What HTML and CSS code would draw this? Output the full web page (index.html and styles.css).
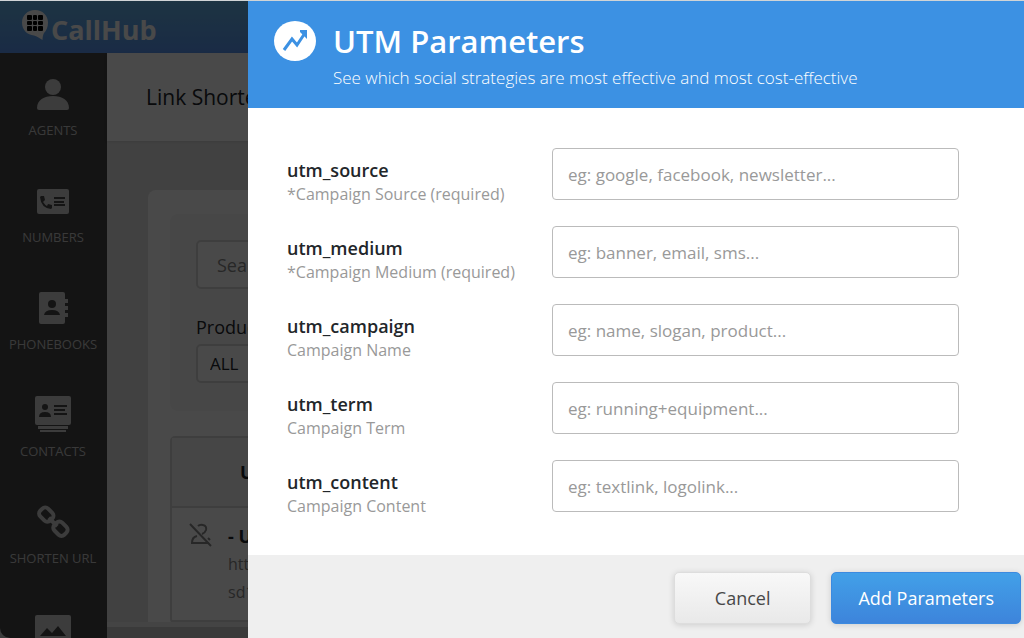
FILE: index.html
```html
<!DOCTYPE html>
<html lang="en">

<head>
    <meta charset="UTF-8">
    <meta name="viewport" content="width=device-width, initial-scale=1.0">
    <title>CallHub - UTM Parameters</title>

    <link rel="stylesheet" href="styles.css">
</head>

<body>
    <div class="page">
        <header class="topbar">
            <svg class="logo-mark" width="28" height="32" viewBox="0 0 28 32">
                <path class="bubble" d="M14 1C6.500 1 1 6.500 1 13.500C1 21 6.500 26 13 26.500C16 27 18 29 21.500 31C21.500 28 22 26 23 24C25.500 21.500 27 18 27 13.500C27 6.500 21.500 1 14 1Z" />
                <g class="keys">
                    <rect x="6" y="6" width="5" height="5" rx="1" />
                    <rect x="12" y="6" width="4" height="5" rx="1" />
                    <rect x="17" y="6" width="5" height="5" rx="1" />
                    <rect x="6" y="12" width="5" height="4" rx="1" />
                    <rect x="12" y="12" width="4" height="4" rx="1" />
                    <rect x="17" y="12" width="5" height="4" rx="1" />
                    <rect x="6" y="17" width="5" height="5" rx="1" />
                    <rect x="12" y="17" width="4" height="5" rx="1" />
                    <rect x="17" y="17" width="5" height="5" rx="1" />
                </g>
            </svg>
            <span class="logo-text">CallHub</span>
        </header>

        <div class="main">
            <nav class="sidebar">
                <a href="#agents">
                    <svg viewBox="0 0 40 40">
                        <circle cx="20" cy="13" r="8" />
                        <path d="M4 34C4 26 11 22 20 22s16 4 16 12q0 2-2 2H6q-2 0-2-2z" />
                    </svg>
                    <span>AGENTS</span>
                </a>
                <a href="#numbers">
                    <svg viewBox="0 0 40 40">
                        <rect x="4" y="8" width="32" height="25" rx="2" />
                        <path class="cut" d="M8 15l3 0 1 4-2 2q2 3 4 4l1-2 4 1v3l-1 1Q8 27 7 16z" />
                        <path class="cut-line" d="M21 17h11M21 21h10M21 24h11" />
                    </svg>
                    <span>NUMBERS</span>
                </a>
                <a href="#phonebooks">
                    <svg viewBox="0 0 40 40">
                        <path d="M8 4h22q2 0 2 2v5h3v4h-3v3h3v4h-3v3h3v4h-3v5q0 2-2 2H8q-2 0-2-2V6q0-2 2-2z" />
                        <circle class="cut" cx="19" cy="16" r="4" />
                        <path class="cut" d="M11 27q1-5 8-5t8 5z" />
                    </svg>
                    <span>PHONEBOOKS</span>
                </a>
                <a href="#contacts">
                    <svg viewBox="0 0 40 40">
                        <rect x="2" y="1" width="36" height="29" rx="2" />
                        <path d="M5 31h30v3H5zM7 35h26v2H7z" />
                        <circle class="cut" cx="12" cy="12" r="3" />
                        <path class="cut" d="M6 22q0-5 6-5t6 5z" />
                        <path class="cut-line" d="M21 11h13M21 15h11M21 19h13" />
                    </svg>
                    <span>CONTACTS</span>
                </a>
                <a href="#shorten">
                    <svg viewBox="0 0 40 40">
                        <g class="chain" transform="rotate(45 20 20)">
                            <rect x="3" y="14" width="14" height="11" rx="4" />
                            <rect x="23" y="14" width="14" height="11" rx="4" />
                            <path d="M14 20h12" />
                        </g>
                    </svg>
                    <span>SHORTEN URL</span>
                </a>
                <a href="#media" aria-label="Media">
                    <svg viewBox="0 0 40 40">
                        <rect x="2" y="6" width="36" height="30" rx="2" />
                        <path class="cut" d="M7 27l7-8 5 5 6-7 8 10z" />
                    </svg>
                </a>
            </nav>

            <main class="content">
                <h1>Link Shortener</h1>

                <section class="panel">
                    <div class="filters">
                        <input type="text" placeholder="Search" aria-label="Search">
                        <label for="product">Product</label>
                        <select id="product">
                            <option>ALL</option>
                        </select>
                    </div>

                    <table class="links">
                        <thead>
                            <tr>
                                <th></th>
                                <th>URL</th>
                            </tr>
                        </thead>
                        <tbody>
                            <tr>
                                <td class="status">
                                    <svg width="26" height="26" viewBox="0 0 26 26">
                                        <path d="M10 4q2-2 5-1 4 1 3 5-1 3-4 4M9 14q-5 1-5 7h17M2 2l21 22M20 16l2 2" />
                                    </svg>
                                </td>
                                <td class="url">
                                    <strong>- URL</strong>
                                    <span>https://</span>
                                    <span>sd1</span>
                                </td>
                            </tr>
                        </tbody>
                    </table>
                </section>
                <div class="scrollbar"></div>
            </main>
        </div>
    </div>

    <div class="overlay"></div>

    <form class="drawer" role="dialog" aria-labelledby="drawer-title">
        <header class="drawer-header">
            <svg class="trend" width="42" height="40" viewBox="0 0 42 40">
                <ellipse cx="21" cy="20" rx="21" ry="20" />
                <path class="line" d="M10 29l8-11 5 6 8-12" />
                <path class="head" d="M26 9h7v9l-3-3-4-4z" />
            </svg>
            <div>
                <h2 id="drawer-title">UTM Parameters</h2>
                <p>See which social strategies are most effective and most cost-effective</p>
            </div>
        </header>

        <div class="fields">
            <div class="field">
                <label for="utm_source">utm_source <small>*Campaign Source (required)</small></label>
                <input id="utm_source" type="text" placeholder="eg: google, facebook, newsletter...">
            </div>
            <div class="field">
                <label for="utm_medium">utm_medium <small>*Campaign Medium (required)</small></label>
                <input id="utm_medium" type="text" placeholder="eg: banner, email, sms...">
            </div>
            <div class="field">
                <label for="utm_campaign">utm_campaign <small>Campaign Name</small></label>
                <input id="utm_campaign" type="text" placeholder="eg: name, slogan, product...">
            </div>
            <div class="field">
                <label for="utm_term">utm_term <small>Campaign Term</small></label>
                <input id="utm_term" type="text" placeholder="eg: running+equipment...">
            </div>
            <div class="field">
                <label for="utm_content">utm_content <small>Campaign Content</small></label>
                <input id="utm_content" type="text" placeholder="eg: textlink, logolink...">
            </div>
        </div>

        <footer class="drawer-footer">
            <button type="button" class="btn">Cancel</button>
            <button type="submit" class="btn primary">Add Parameters</button>
        </footer>
    </form>
</body>

</html>
```
FILE: styles.css
```css
* {
    box-sizing: border-box;
}

body {
    margin: 0;
    height: 100vh;
    overflow: hidden;
    font-family: "Open Sans", "Noto Sans", sans-serif;
    color: #22262a;
    background-color: #d0d4d6;
}

h1,
h2,
p {
    margin: 0;
}

input,
select,
button {
    font-family: inherit;
}

.page {
    display: flex;
    flex-direction: column;
    height: 100vh;
    padding-top: 1px;
    border-bottom-left-radius: 10px;
    overflow: hidden;
}

/* top bar */
.topbar {
    flex: none;
    display: flex;
    align-items: flex-start;
    gap: 2px;
    height: 52px;
    padding: 8px 21px;
    background-image: linear-gradient(#65b4e8, #5a96f0);
}

.bubble {
    fill: #ffffff;
}

.keys {
    fill: #000000;
}

.logo-text {
    margin-top: 3px;
    font-size: 27px;
    line-height: 36px;
    font-weight: 700;
    color: #ffffff;
}

.main {
    flex: 1;
    display: flex;
    min-height: 0;
}

/* side menu */
.sidebar {
    flex: none;
    width: 107px;
    overflow: hidden;
    background-color: #464646;
}

.sidebar a {
    display: flex;
    flex-direction: column;
    align-items: center;
    gap: 6px;
    height: 107px;
    padding: 21px 1px 0 0;
    font-size: 13px;
    line-height: 20px;
    color: #c8c8c8;
    text-decoration: none;
    white-space: nowrap;
}

.sidebar svg {
    flex: none;
    width: 40px;
    height: 40px;
    fill: #d0d0d0;
}

.sidebar .cut {
    fill: #464646;
}

.sidebar .cut-line {
    fill: none;
    stroke: #464646;
    stroke-width: 2;
}

.sidebar .chain {
    fill: none;
    stroke: #d0d0d0;
    stroke-width: 4;
}

/* link list behind the drawer */
.content {
    flex: 1;
    display: flex;
    flex-direction: column;
    min-width: 0;
    background-color: #e4e4e4;
}

.content h1 {
    flex: none;
    padding: 29px 39px;
    font-size: 21px;
    line-height: 30px;
    font-weight: 400;
    background-color: #ffffff;
    box-shadow: 0 1px 3px rgba(0, 0, 0, 0.1);
}

.panel {
    flex: 1;
    min-height: 0;
    margin: 49px 40px 0 41px;
    padding: 24px 22px 0;
    border-radius: 8px 8px 0 0;
    overflow: hidden;
    background-color: #ffffff;
}

.filters {
    display: flex;
    flex-direction: column;
    align-items: flex-start;
    height: 197px;
    padding: 26px;
    border-radius: 8px;
    background-color: #f8f8f8;
}

.filters input {
    width: 240px;
    height: 49px;
    padding: 0 19px;
    border: 2px solid #d8d8d8;
    border-radius: 5px;
    font-size: 18px;
    background-color: #ffffff;
}

.filters input::placeholder {
    color: #888888;
}

.filters label {
    margin: 26px 0 4px;
    font-size: 18px;
    line-height: 25px;
}

.filters select {
    width: 240px;
    height: 39px;
    padding: 0 12px;
    border: 2px solid #d8d8d8;
    border-radius: 5px;
    font-size: 17px;
    color: #22262a;
    appearance: none;
    background-color: #ffffff;
}

.links {
    width: 100%;
    margin-top: 25px;
    border: 2px solid #d8d8d8;
    border-radius: 5px;
    border-spacing: 0;
}

.links th {
    height: 70px;
    padding: 0 12px;
    border-bottom: 2px solid #d8d8d8;
    font-size: 18px;
    text-align: left;
    background-color: #f3f3f3;
}

.links td {
    height: 112px;
    padding: 14px 0;
    border-bottom: 2px solid #d8d8d8;
    vertical-align: top;
}

.links .status {
    width: 56px;
    padding-left: 16px;
}

.status svg {
    fill: none;
    stroke: #888888;
    stroke-width: 2;
}

.url strong,
.url span {
    display: block;
    line-height: 28px;
}

.url strong {
    font-size: 18px;
}

.url span {
    font-size: 16px;
    color: #888888;
}

.scrollbar {
    flex: none;
    height: 16px;
    border-top: 5px solid #ededed;
    background-color: #cccccc;
}

.overlay {
    position: fixed;
    inset: 1px 0 0;
    background-color: rgba(0, 0, 0, 0.715);
}

/* drawer */
.drawer {
    position: fixed;
    inset: 1px 0 0 248px;
    display: flex;
    flex-direction: column;
    background-color: #ffffff;
}

.drawer-header {
    display: flex;
    gap: 17px;
    height: 107px;
    padding: 20px 26px;
    color: #ffffff;
    background-color: #3c91e3;
}

.drawer-header svg {
    flex: none;
    fill: #ffffff;
}

.trend .line {
    fill: none;
    stroke: #3c91e3;
    stroke-width: 3;
}

.trend .head {
    fill: #3c91e3;
}

.drawer-header h2 {
    font-size: 31px;
    line-height: 40px;
    font-weight: 600;
}

.drawer-header p {
    margin-top: 5px;
    font-size: 17px;
    line-height: 24px;
    font-weight: 300;
}

.fields {
    flex: 1;
    display: flex;
    flex-direction: column;
    gap: 20px;
    padding: 40px 65px 0 39px;
}

.field {
    display: grid;
    grid-template-columns: 265px 1fr;
}

.field label {
    padding-top: 10px;
    font-size: 18px;
    line-height: 24px;
    font-weight: 600;
}

.field small {
    display: block;
    font-size: 16px;
    font-weight: 400;
    color: #999999;
}

.field input {
    height: 52px;
    padding: 0 15px;
    border: 1px solid #bbbbbb;
    border-radius: 4px;
    font-size: 17px;
    color: #22262a;
}

.field input::placeholder {
    color: #999999;
}

.drawer-footer {
    display: flex;
    justify-content: flex-end;
    gap: 20px;
    height: 83px;
    padding: 17px 3px 14px;
    background-color: #efefef;
}

.btn {
    padding: 0 40px;
    border: 1px solid #dddddd;
    border-radius: 5px;
    font-size: 18px;
    color: #484848;
    background-image: linear-gradient(#f8f8f8, #e9e9e9);
    box-shadow: 0 1px 6px rgba(0, 0, 0, 0.15);
}

.btn.primary {
    padding: 0 26px;
    border-color: #3c8ae0;
    color: #ffffff;
    background-image: linear-gradient(#42a0e8, #3d84db);
}
```
